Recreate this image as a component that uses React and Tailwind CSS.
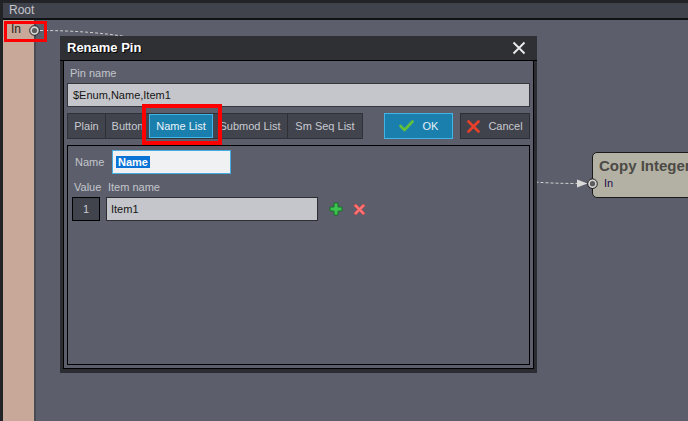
import React from "react";

function Pin({ cx, cy }) {
  return (
    <g>
      <circle cx={cx} cy={cy} r="4.8" fill="#d4d4d4" stroke="#1c1c1c" strokeWidth="1" />
      <circle cx={cx} cy={cy} r="2.6" fill="#5c5c5c" />
    </g>
  );
}

export default function App() {
  return (
    <div className="relative w-[688px] h-[421px] overflow-hidden bg-[#222327] font-['Liberation_Sans',Arial,sans-serif] text-[11px] leading-[13px]">
      {/* editor frame */}
      <div className="flex flex-col h-full pt-[3px] pl-[3px]">
        <div className="h-[15px] shrink-0 bg-[#40434c] pl-[6px] text-[12px] leading-[15px] text-[#c4c6ce]">Root</div>
        <div className="h-[2px] shrink-0 bg-[#111215]" />
        <div className="flex flex-1">
          <div className="w-[31px] bg-[#c8a999] pl-[8px] pt-[2px] text-[12px] leading-[14px] text-[#2a1e18]">In</div>
          <div className="w-[2px] bg-[#484a54]" />
          <div className="flex-1 bg-[#5c5f6b]" />
        </div>
      </div>

      {/* node on canvas */}
      <div className="absolute left-[592px] top-[152px] w-[130px] h-[46px] rounded-[5px] border border-[#1a1a1a] bg-[#b3b1a3] pl-[6px] pt-[4px]">
        <div className="text-[15px] leading-[18px] font-bold text-[#4b4a46] whitespace-nowrap">Copy Integer</div>
        <div className="mt-[2px] pl-[5px] text-[11px] leading-[13px] text-[#1e0b4c]">In</div>
      </div>

      {/* connection */}
      <svg className="absolute left-0 top-0 pointer-events-none" width="688" height="421">
        <path d="M40 30.5 C309 30.5 309 183.5 578 183.5" fill="none" stroke="#cfcfcf" strokeWidth="1" strokeDasharray="3 2" />
        <polygon points="577,179.5 577,187.5 587.5,183.5" fill="#dadada" />
        <Pin cx={34.5} cy={30.5} />
        <Pin cx={592.5} cy={183.7} />
      </svg>

      {/* dialog */}
      <div className="absolute left-[60px] top-[36px] w-[477px] h-[337px] flex flex-col bg-[#2c2d32]">
        <div className="h-[25px] shrink-0 bg-[#2f3034] border-b border-black flex items-center justify-between pl-[7px] pr-[11px]">
          <span className="text-[13px] leading-[16px] font-bold text-white [text-shadow:1px_1px_0_#000]">Rename Pin</span>
          <svg width="14" height="14" viewBox="0 0 14 14">
            <path d="M1.5 1.5 L12.5 12.5 M12.5 1.5 L1.5 12.5" stroke="#e8e8e8" strokeWidth="2" />
          </svg>
        </div>
        <div className="flex-1 flex px-[3px] pb-[4px]">
          <div className="flex-1 flex flex-col border-x border-b border-black bg-[#5c5f6b] px-[3px] pb-[3px]">
            <div className="mt-[6px] ml-[3px] text-[#c3c5cc]">Pin name</div>
            <div className="mt-[3px] h-[24px] shrink-0 border border-[#34363b] bg-[#c5c6cb] pl-[5px] flex items-center text-[#151515]">$Enum,Name,Item1</div>

            <div className="mt-[6px] h-[26px] shrink-0 flex">
              <div className="flex h-full border border-[#30323a] bg-[#41444d] text-[#c8cad0]">
                <div className="w-[37px] flex items-center justify-center">Plain</div>
                <div className="w-px bg-[#2e3036]" />
                <div className="w-[43px] flex items-center justify-center whitespace-nowrap">Button</div>
                <div className="w-[64px] flex items-center justify-center bg-[#1b7fae] border border-[#42b4e8] text-[#eaf4fa] whitespace-nowrap">Name List</div>
                <div className="w-[74px] flex items-center justify-center whitespace-nowrap">Submod List</div>
                <div className="w-px bg-[#2e3036]" />
                <div className="w-[74px] flex items-center justify-center whitespace-nowrap">Sm Seq List</div>
              </div>
              <div className="ml-auto flex gap-[7px] h-full">
                <div className="w-[69px] h-full bg-[#1b7fae] border border-[#42b4e8] flex items-center justify-center gap-[9px] text-[#e4f0f8]">
                  <svg width="15" height="12" viewBox="0 0 15 12">
                    <path d="M1.5 6 L5.5 10 L13.5 1.5" fill="none" stroke="#62c03a" strokeWidth="2.6" strokeLinecap="round" strokeLinejoin="round" />
                  </svg>
                  <span>OK</span>
                </div>
                <div className="w-[70px] h-full bg-[#40434c] border border-[#2c2e33] flex items-center justify-center gap-[8px] text-[#c8cad0]">
                  <svg width="13" height="13" viewBox="0 0 13 13">
                    <path d="M1.5 1.5 L11.5 11.5 M11.5 1.5 L1.5 11.5" stroke="#e8402a" strokeWidth="2.6" strokeLinecap="round" />
                  </svg>
                  <span>Cancel</span>
                </div>
              </div>
            </div>

            <div className="mt-[6px] flex-1 border border-black pl-[4px] flex flex-col">
              <div className="mt-[4px] flex items-center h-[24px]">
                <span className="ml-[3px] w-[37px] text-[#c3c5cc]">Name</span>
                <div className="w-[119px] h-[24px] border border-[#46ade2] bg-[#eff1f3] flex items-center pl-[3px]">
                  <span className="bg-[#0a74d6] text-white font-bold px-[2px] leading-[12px]">Name</span>
                </div>
              </div>
              <div className="mt-[7px] flex text-[#c3c5cc]">
                <span className="w-[34px] pl-[2px]">Value</span>
                <span className="pl-[2px]">Item name</span>
              </div>
              <div className="mt-[3px] flex items-center">
                <div className="w-[28px] h-[24px] border border-black bg-[#41444d] flex items-center justify-center text-[#c8cad0]">1</div>
                <div className="ml-[6px] w-[212px] h-[24px] border border-[#2e2f34] bg-[#c5c6cb] pl-[4px] flex items-center text-[#151515]">Item1</div>
                <svg className="ml-[11px]" width="14" height="14" viewBox="0 0 14 14">
                  <path d="M5 1 H9 V5 H13 V9 H9 V13 H5 V9 H1 V5 H5 Z" fill="#3dc14f" stroke="#17702a" strokeWidth="1" />
                </svg>
                <svg className="ml-[10px]" width="13" height="13" viewBox="0 0 14 14">
                  <path d="M1 3 L3 1 L7 5 L11 1 L13 3 L9 7 L13 11 L11 13 L7 9 L3 13 L1 11 L5 7 Z" fill="#ff7676" stroke="#e04646" strokeWidth="0.8" />
                </svg>
              </div>
            </div>
          </div>
        </div>
      </div>

      {/* annotation boxes */}
      <div className="absolute left-[4px] top-[21px] w-[43px] h-[21px] border-[3px] border-[#ff0000]" />
      <div className="absolute left-[142px] top-[104px] w-[80px] h-[41px] border-[4px] border-[#ff0000]" />
    </div>
  );
}
